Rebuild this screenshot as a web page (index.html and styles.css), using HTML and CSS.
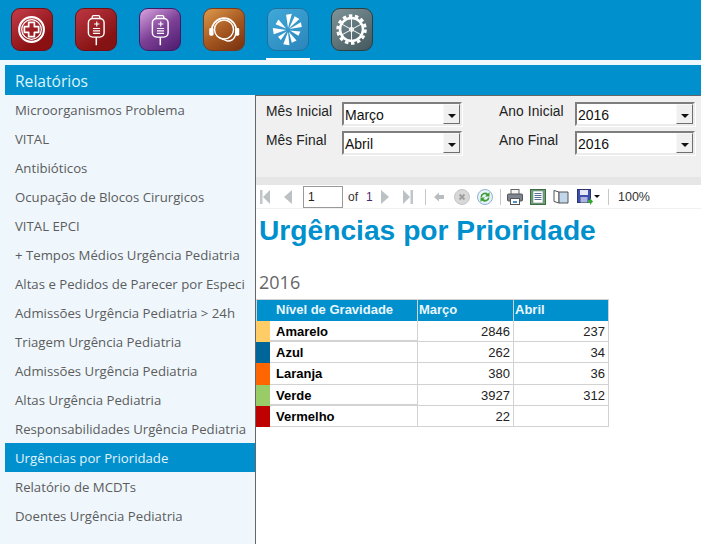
FILE: index.html
```html
<!DOCTYPE html>
<html lang="pt">
<head>
<meta charset="utf-8">
<title>Relatórios</title>
<link rel="stylesheet" href="styles.css">
</head>
<body>
<header class="topbar">
  <div class="tile t-red"><svg viewBox="0 0 42 43" class="ico"><g fill="none" stroke="#fff"><circle cx="20.500" cy="21.500" r="13" stroke-width="2.200"/><circle cx="20.500" cy="21.500" r="10.300" stroke-width="1.300"/><path d="M17.500 14h6v4.500H28v6h-4.500V29h-6v-4.500H13v-6h4.500z" stroke-width="1.800" stroke-linejoin="round"/></g></svg></div>
  <div class="tile t-red2"><svg viewBox="0 0 42 43" class="ico"><use href="#bag"/></svg></div>
  <div class="tile t-purple"><svg viewBox="0 0 42 43" class="ico"><use href="#bag"/></svg></div>
  <div class="tile t-orange"><svg viewBox="0 0 42 43" class="ico"><g fill="none" stroke="#fff" stroke-linecap="round"><path d="M8 23a13 13.500 0 1 1 26 0" stroke-width="1.800"/><circle cx="21" cy="21.500" r="10" stroke-width="1.500"/><path d="M33 27c-1 5-5 7-9 6.500l-8-3.500" stroke-width="1.500"/></g><rect x="5.500" y="20" width="4.500" height="8" rx="1.500" fill="#fff"/><rect x="32.500" y="20" width="4.500" height="8" rx="1.500" fill="#fff"/></svg></div>
  <div class="tile-wrap">
    <div class="tile t-blue"><svg viewBox="0 0 42 43" class="ico"><g fill="#fff"><path d="M21 20l-2-14 6-1z"/><path d="M22 20.500l6-13 5 3z"/><path d="M22.500 21l12-7 1 5z"/><path d="M23 22.500l11 1-2 4.500z"/><path d="M22 24l8 9-5 2.500z"/><path d="M21 24l1.500 14-6.500-1z"/><path d="M19.500 23.500l-6 9-3-3.500z"/><path d="M19 22l-13 4.500-1-6.500z"/><path d="M19 20.500l-11-4.500 3-5z"/></g></svg></div>
  </div>
  <div class="tile t-gray"><svg viewBox="0 0 42 43" class="ico"><g fill="none" stroke="#fff"><circle cx="20.500" cy="21.500" r="14.500" stroke-width="3" stroke-dasharray="3.700 2.800"/><circle cx="20.500" cy="21.500" r="12" stroke-width="2.600"/><path d="M20.500 10v23M10.500 16l20 11M10.500 27l20-11" stroke-width="1"/><circle cx="20.500" cy="21.500" r="2" stroke-width="1.200"/></g></svg></div>
</header>
<svg class="defs" width="0" height="0"><defs><g id="bag" fill="none" stroke="#fff"><path d="M17 10V8.500q0-1.500 1.500-1.500h5q1.500 0 1.500 1.500V10" stroke-width="1.400"/><rect x="13" y="10" width="16.500" height="19.500" rx="4.500" stroke-width="1.500"/><path d="M21.300 29.500V38" stroke-width="1.600"/><path d="M21.800 13v5.400M19 15.700h5.600M17.800 20.500h7.500M17.800 23h7.500M17.800 25.500h7.500" stroke-width="1.200"/></g></defs></svg>
<div class="band"></div>
<main class="shell">
  <div class="title-bar">Relatórios</div>
  <div class="columns">
    <nav class="menu">
      <a class="item">Microorganismos Problema</a>
      <a class="item">VITAL</a>
      <a class="item">Antibióticos</a>
      <a class="item">Ocupação de Blocos Cirurgicos</a>
      <a class="item">VITAL EPCI</a>
      <a class="item">+ Tempos Médios Urgência Pediatria</a>
      <a class="item">Altas e Pedidos de Parecer por Especi</a>
      <a class="item">Admissões Urgência Pediatria &gt; 24h</a>
      <a class="item">Triagem Urgência Pediatria</a>
      <a class="item">Admissões Urgência Pediatria</a>
      <a class="item">Altas Urgência Pediatria</a>
      <a class="item">Responsabilidades Urgência Pediatria</a>
      <a class="item active">Urgências por Prioridade</a>
      <a class="item">Relatório de MCDTs</a>
      <a class="item">Doentes Urgência Pediatria</a>
    </nav>
    <section class="report">
      <div class="filters">
        <span class="flabel">Mês Inicial</span>
        <div class="combo"><span class="combo-val">Março</span><span class="combo-btn"></span></div>
        <span class="flabel second">Ano Inicial</span>
        <div class="combo"><span class="combo-val">2016</span><span class="combo-btn"></span></div>
        <span class="flabel">Mês Final</span>
        <div class="combo"><span class="combo-val">Abril</span><span class="combo-btn"></span></div>
        <span class="flabel second">Ano Final</span>
        <div class="combo"><span class="combo-val">2016</span><span class="combo-btn"></span></div>
      </div>
      <div class="splitter"></div>
      <div class="toolbar">
        <svg class="tb w10" viewBox="0 0 10 16"><rect x="0" y="1" width="2.500" height="14" fill="#c2c6c8"/><path d="M10 1v14L3 8z" fill="#bcc1c3"/></svg>
        <svg class="tb w8 gap14" viewBox="0 0 8 16"><path d="M8 1v14L0 8z" fill="#bcc1c3"/></svg>
        <div class="page-input">1</div>
        <span class="tbtext of">of</span>
        <span class="tbtext num">1</span>
        <svg class="tb w8 gap-next" viewBox="0 0 8 16"><path d="M0 1v14l8-7z" fill="#bcc1c3"/></svg>
        <svg class="tb w10 gap14" viewBox="0 0 10 16"><path d="M0 1v14l7-7z" fill="#bcc1c3"/><rect x="7.500" y="1" width="2.500" height="14" fill="#c2c6c8"/></svg>
        <span class="sep s1"></span>
        <svg class="tb w10 gap8" viewBox="0 0 10 16"><path d="M0 8l5-4.500V6h5v4H5v2.500z" fill="#b9bdbf"/></svg>
        <svg class="tb w16 gap10" viewBox="0 0 16 16"><circle cx="8" cy="8" r="7.500" fill="#d8d8d8" stroke="#c4c4c4"/><path d="M5.500 5.500l5 5M10.500 5.500l-5 5" stroke="#a0a0a0" stroke-width="2"/></svg>
        <svg class="tb w16 gap7" viewBox="0 0 16 16"><circle cx="8" cy="8" r="7.500" fill="#e8f2fb" stroke="#8fb1d4"/><path d="M3.500 8a4.500 4.500 0 0 1 7.500-3.300L12.500 3v4.500H8l1.600-1.600A2.800 2.800 0 0 0 5 8z" fill="#3f9c35"/><path d="M12.500 8.500a4.500 4.500 0 0 1-7.500 3L3.500 13V8.500H8l-1.600 1.600A2.800 2.800 0 0 0 11 8.500z" fill="#3f9c35"/></svg>
        <span class="sep s2"></span>
        <svg class="tb w16 gap6" viewBox="0 0 16 16"><rect x="4" y="0.500" width="8" height="5" fill="#f4f4f4" stroke="#666"/><rect x="0.500" y="5" width="15" height="7" rx="1" fill="#7d8590" stroke="#555"/><rect x="3.500" y="9.500" width="9" height="6" fill="#fff" stroke="#555"/><rect x="6" y="12" width="4" height="2" fill="#4a90d0"/></svg>
        <svg class="tb w16 gap7" viewBox="0 0 16 16"><rect x="0.500" y="0.500" width="15" height="15" fill="#6ea26a" stroke="#3d6b44"/><rect x="3" y="2" width="10" height="12" fill="#fff" stroke="#6b7f9c" stroke-width=".6"/><path d="M4.500 4.500h7M4.500 6.500h7M4.500 8.500h7M4.500 10.500h7" stroke="#5a6f94"/></svg>
        <svg class="tb w16 gap7" viewBox="0 0 16 16"><path d="M1 1.500l5 1.500v11l-5-1.500z" fill="#fff" stroke="#555"/><path d="M6 3h9v11H6z" fill="#c3d7ea" stroke="#555"/></svg>
        <svg class="tb w16 gap8" viewBox="0 0 16 16"><rect x="0.500" y="0.500" width="13" height="13" fill="#3d4fa8" stroke="#2b3570"/><rect x="3" y="1" width="8" height="5" fill="#e6e9f5"/><rect x="3.500" y="8" width="7" height="5.500" fill="#aab4dc"/><path d="M11 11h2V9l3 3.500-3 3.500v-2h-2z" fill="#38a636"/></svg>
        <span class="caret"></span>
        <span class="sep s3"></span>
        <span class="tbtext zoom">100%</span>
      </div>
      <div class="doc">
        <h1 class="doc-title">Urgências por Prioridade</h1>
        <h2 class="doc-year">2016</h2>
        <table class="grid">
          <colgroup><col class="c-sw"><col class="c-name"><col class="c-num"><col class="c-num2"></colgroup>
          <thead><tr><th colspan="2" class="th-first">Nível de Gravidade</th><th>Março</th><th>Abril</th></tr></thead>
          <tbody>
            <tr class="thick"><td class="sw sw-a"></td><td class="name">Amarelo</td><td>2846</td><td>237</td></tr>
            <tr><td class="sw sw-b"></td><td class="name">Azul</td><td>262</td><td>34</td></tr>
            <tr class="tall"><td class="sw sw-c"></td><td class="name">Laranja</td><td>380</td><td>36</td></tr>
            <tr class="thick"><td class="sw sw-d"></td><td class="name">Verde</td><td>3927</td><td>312</td></tr>
            <tr><td class="sw sw-e"></td><td class="name">Vermelho</td><td>22</td><td></td></tr>
          </tbody>
        </table>
      </div>
    </section>
  </div>
</main>
</body>
</html>
```
FILE: styles.css
```css
* { box-sizing: border-box; }
html, body { margin: 0; height: 100%; }
body { width: 701px; height: 544px; overflow: hidden; background: #eef7fb; font-family: "Open Sans", sans-serif; display: flex; flex-direction: column; }
.defs { position: absolute; }

.topbar { height: 60px; background: #0090cd; display: flex; align-items: flex-start; padding: 8px 0 0 11px; gap: 22px; flex: none; }
.tile { width: 42px; height: 43px; border-radius: 9px; border: 1px solid rgba(40,20,30,.45); flex: none; }
.tile-wrap { height: 52px; position: relative; }
.tile-wrap::after { content: ""; position: absolute; left: -1px; right: -1px; bottom: 0; height: 2px; background: #fff; }
.ico { display: block; width: 100%; height: 100%; }
.t-red { background: linear-gradient(145deg, #c43d4a, #8a1012 75%); border-color: #6e0f14; }
.t-red2 { background: linear-gradient(145deg, #bd3743, #861313 75%); border-color: #6e0f14; }
.t-purple { background: linear-gradient(145deg, #d9a5e0, #7d4196 50%, #4d1b6e); border-color: #3f1d66; }
.t-orange { background: linear-gradient(145deg, #dd9a4d, #a85a22 50%, #76300e); border-color: #7c3a1a; }
.t-blue { background: linear-gradient(145deg, #3fa9da, #2b85ba); border-color: #1f6f9f; }
.t-gray { background: linear-gradient(145deg, #7f9499, #43585c); border-color: #2e3f42; }

.band { height: 5px; flex: none; }
.shell { flex: 1; min-height: 0; display: flex; flex-direction: column; padding-left: 5px; }
.title-bar { height: 30px; flex: none; background: #0090cd; color: #dff3fb; font-size: 15.600px; line-height: 32px; padding-left: 10px; }
.columns { flex: 1; min-height: 0; display: flex; }

.menu { width: 250px; flex: none; background: #eff7fd; display: flex; flex-direction: column; }
.item { height: 29px; flex: none; padding-left: 10px; line-height: 31px; font-size: 13.200px; color: #5c5c5c; white-space: nowrap; overflow: hidden; }
.item.active { background: #0090cd; color: #e4f4fb; }

.report { flex: 1; min-width: 0; background: #fff; border-left: 1px solid #666; display: flex; flex-direction: column; }
.filters { height: 82px; flex: none; background: #f0f0f0; border-top: 1px solid #666; padding: 6px 0 0 10px; display: grid; grid-template-columns: 76px 120px 37px 76px 120px; grid-auto-rows: 24px; row-gap: 5px; font-family: "Liberation Sans", sans-serif; font-size: 13.800px; color: #222; align-content: start; }
.flabel { line-height: 19px; letter-spacing: .1px; }
.flabel.second { grid-column: 4; }
.combo { display: flex; background: #fff; border: 2px solid; border-color: #7e7e7e #ececec #ececec #7e7e7e; box-shadow: 1px 1px 0 #fff; }
.combo-val { flex: 1; line-height: 22px; padding-left: 1px; color: #111; font-size: 14px; }
.combo-btn { width: 17px; background: #f0f0f0; border: 1px solid; border-color: #f8f8f8 #6e6e6e #6e6e6e #f8f8f8; position: relative; }
.combo-btn::after { content: ""; position: absolute; left: 4px; top: 9px; border: 4px solid transparent; border-top-color: #111; border-bottom: 0; }
.splitter { height: 8px; flex: none; background: #e6e6e6; }

.toolbar { height: 24px; flex: none; display: flex; align-items: center; padding-left: 4px; background: #fff; font-family: "Liberation Sans", sans-serif; font-size: 12px; color: #333; border-bottom: 1px solid #f0f0f0; }
.tb { display: block; flex: none; height: 16px; }
.w8 { width: 8px; } .w10 { width: 10px; } .w16 { width: 16px; }
.gap14 { margin-left: 14px; }
.gap6 { margin-left: 6px; } .gap7 { margin-left: 7px; } .gap8 { margin-left: 8px; } .gap10 { margin-left: 10px; }
.page-input { width: 40px; height: 22px; margin-left: 11px; border: 1px solid #999; background: #fff; padding-left: 4px; line-height: 20px; color: #222; }
.tbtext { flex: none; }
.of { margin-left: 5px; width: 10px; }
.num { margin-left: 8px; width: 7px; color: #4a2a70; }
.gap-next { margin-left: 8px; }
.sep { width: 1px; height: 16px; background: #c8c8c8; flex: none; }
.s1 { margin-left: 12px; } .s2 { margin-left: 7px; } .s3 { margin-left: 8px; }
.caret { width: 0; height: 0; border: 3.500px solid transparent; border-top-color: #111; border-bottom: 0; margin-left: 1px; flex: none; }
.zoom { margin-left: 9px; font-size: 12.500px; }

.doc { flex: 1; min-height: 0; padding-top: 5px; }
.doc-title { margin: 0 0 0 3px; font: bold 28.200px/32px "Liberation Sans", sans-serif; color: #0090cd; }
.doc-year { margin: 24px 0 6px 3px; font: normal 18px/24px "Open Sans", sans-serif; color: #666; height: 23px; }

.grid { border-collapse: separate; border-spacing: 0; table-layout: fixed; width: 353px; font-family: "Liberation Sans", sans-serif; font-size: 13px; }
.c-sw { width: 14px; } .c-name { width: 148px; } .c-num { width: 96px; } .c-num2 { width: 95px; }
.grid th { background: #0090cd; color: #eaf6fb; height: 22px; padding: 0 0 2px 1px; text-align: left; font-weight: bold; border-top: 1px solid #d2d2d2; border-right: 1px solid #d2d2d2; }
.grid th.th-first { padding-left: 19px; border-left: 1px solid #d2d2d2; }
.grid td { height: 21px; padding: 0 3px 0 0; text-align: right; color: #222; border-right: 1px solid #d2d2d2; border-bottom: 1px solid #d2d2d2; }
.grid td.name { text-align: left; font-weight: bold; color: #000; padding-left: 6px; }
.grid .thick td.name { box-shadow: inset 0 -1px 0 #d2d2d2; }
.grid td.sw { border: 0; padding: 0; }
.grid .tall td { height: 22px; }
.sw-a { background: #ffcc66; } .sw-b { background: #006699; } .sw-c { background: #ff6600; } .sw-d { background: #99cc66; } .sw-e { background: #bf0000; }
```
